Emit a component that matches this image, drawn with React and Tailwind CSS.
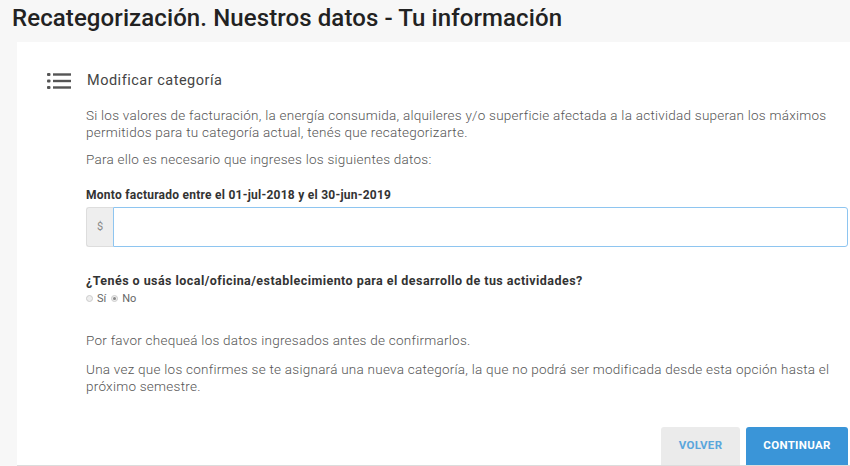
import React, { useState } from "react";

function ListIcon() {
  return (
    <svg width="24" height="16" viewBox="0 0 24 16" fill="#555">
      <rect x="0" y="0" width="3.5" height="3" rx="1" />
      <rect x="6" y="0.3" width="18" height="2.4" />
      <rect x="0" y="6.5" width="3.5" height="3" rx="1" />
      <rect x="6" y="6.8" width="18" height="2.4" />
      <rect x="0" y="13" width="3.5" height="3" rx="1" />
      <rect x="6" y="13.3" width="18" height="2.4" />
    </svg>
  );
}

export default function App() {
  const [monto, setMonto] = useState("");
  const [local, setLocal] = useState("no");

  return (
    <div className="w-[850px] h-[466px] overflow-hidden bg-[#f7f7f7] font-['Roboto',sans-serif] flex flex-col">
      <h1 className="h-[42px] pl-3 pt-[4px] text-[24px] font-medium tracking-[0.1px] text-[#222] leading-[28px]">
        Recategorización. Nuestros datos - Tu información
      </h1>

      <div className="flex-1 ml-[17px] bg-white border-b border-[#dcdcdc] flex flex-col">
        <div className="flex items-center pt-[28px] pl-[30px]">
          <ListIcon />
          <span className="ml-4 text-[14.5px] text-[#444] tracking-[0.5px]">Modificar categoría</span>
        </div>

        <div className="pl-[69px] pr-[20px] text-[13.5px] text-[#555] leading-[17px]">
          <p className="mt-[15px] font-light tracking-[0.25px]">
            Si los valores de facturación, la energía consumida, alquileres y/o superficie afectada a la actividad superan los máximos permitidos para tu categoría actual, tenés que recategorizarte.
          </p>
          <p className="mt-[10px] font-light tracking-[0.25px]">
            Para ello es necesario que ingreses los siguientes datos:
          </p>

          <label className="block mt-[20px] text-[12px] leading-[15px] font-bold text-[#333] tracking-[0.25px]">
            Monto facturado entre el 01-jul-2018 y el 30-jun-2019
          </label>
          <div className="flex mt-[4px] h-[40px] -mr-[18px]">
            <span className="w-[27px] flex items-center justify-center bg-[#eeeeee] border border-[#dddddd] border-r-0 rounded-l-[3px] text-[11px] text-[#888]">
              $
            </span>
            <input
              value={monto}
              onChange={(e) => setMonto(e.target.value)}
              className="flex-1 border border-[#8ec5f0] rounded-r-[3px] outline-none px-2 text-[13px] text-[#333]"
            />
          </div>

          <p className="mt-[26px] text-[12.5px] leading-[15px] font-bold text-[#333] tracking-[0.45px]">
            ¿Tenés o usás local/oficina/establecimiento para el desarrollo de tus actividades?
          </p>
          <div className="flex items-center gap-[3px] mt-[4px] text-[11px] leading-[14px] text-[#666]">
            <label className="flex items-center gap-[4px]" onClick={() => setLocal("si")}>
              <span className="w-[7px] h-[7px] rounded-full border border-[#ccc] bg-[#eee] flex items-center justify-center">
                {local === "si" && <span className="w-[3px] h-[3px] rounded-full bg-[#888]" />}
              </span>
              Sí
            </label>
            <label className="flex items-center gap-[4px] ml-[2px]" onClick={() => setLocal("no")}>
              <span className="w-[7px] h-[7px] rounded-full border border-[#ccc] bg-[#eee] flex items-center justify-center">
                {local === "no" && <span className="w-[3px] h-[3px] rounded-full bg-[#888]" />}
              </span>
              No
            </label>
          </div>

          <p className="mt-[26px] font-light tracking-[0.25px]">
            Por favor chequeá los datos ingresados antes de confirmarlos.
          </p>
          <p className="mt-[12px] font-light tracking-[0.25px]">
            Una vez que los confirmes se te asignará una nueva categoría, la que no podrá ser modificada desde esta opción hasta el próximo semestre.
          </p>
        </div>

        <div className="mt-auto flex justify-end gap-[6px] pr-[2px]">
          <button className="w-[79px] h-[38px] bg-[#ebebeb] rounded-t-[3px] text-[11.5px] font-bold text-[#5aa6dc] tracking-[0.3px]">
            VOLVER
          </button>
          <button className="w-[102px] h-[38px] bg-[#3a95d8] rounded-t-[3px] text-[11.5px] font-bold text-white tracking-[0.3px]">
            CONTINUAR
          </button>
        </div>
      </div>
    </div>
  );
}
